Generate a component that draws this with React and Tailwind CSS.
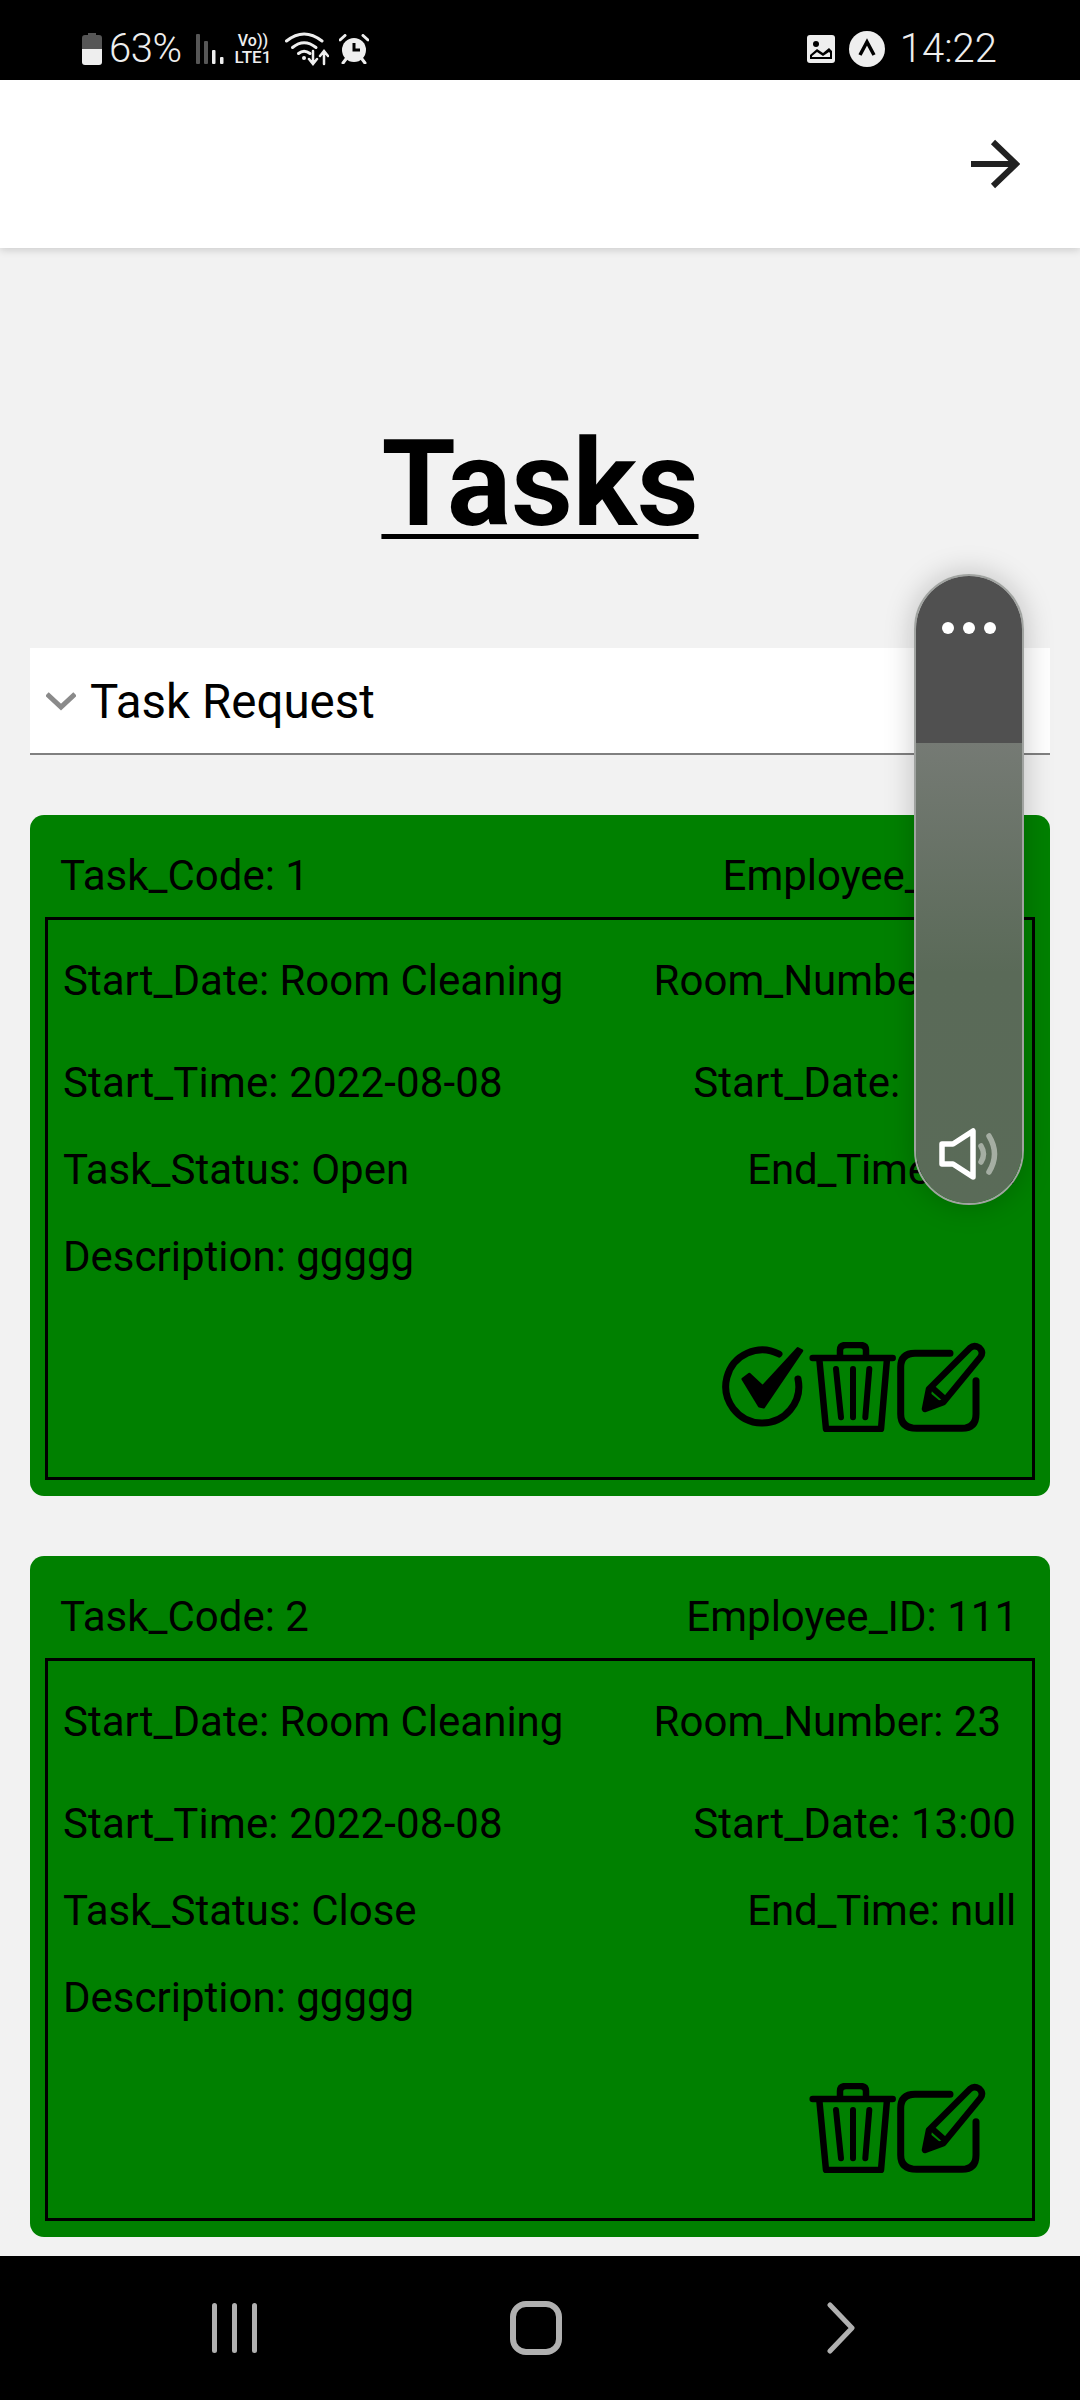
import React from 'react';

const font = "font-['Roboto','Liberation_Sans',sans-serif]";

const CheckIcon = () => (
  <svg width="90" height="90" viewBox="0 0 90 90" fill="none">
    <path d="M60 12 A36.5 36.5 0 1 0 79 37" stroke="#000" strokeWidth="7" strokeLinecap="round" />
    <path d="M23.7 37 L30.3 32 L43.7 44.3 L78.7 6.3 L83 8.7 L44.7 65.3 L40.3 64.3 Z" fill="#000" stroke="#000" strokeWidth="2.5" strokeLinejoin="round" />
  </svg>
);

const TrashIcon = () => (
  <svg width="90" height="90" viewBox="0 0 90 90" fill="none" stroke="#000" strokeLinecap="round" strokeLinejoin="round">
    <path d="M3.7 16 H83.7" strokeWidth="6.5" />
    <path d="M31 14 V8 Q31 3 37 3 H51 Q57 3 57 8 V14" strokeWidth="6.5" />
    <path d="M10.3 17 L17 87 H72 L78 17" strokeWidth="6.5" />
    <path d="M27 27 L32 75.3 M44 27 V75.3 M60.3 27 L56.3 75.3" strokeWidth="6" />
  </svg>
);

const EditIcon = () => (
  <svg width="90" height="90" viewBox="0 0 90 90" fill="none" stroke="#000" strokeLinecap="round" strokeLinejoin="round" className="ml-[-3px]">
    <path d="M54 11.3 H19 Q4.7 11.3 4.7 25.3 V72 Q4.7 86.3 20.7 86.3 H66 Q80 86.3 80 72 V38.7" strokeWidth="7" />
    <path d="M29 67 L33 47 L74 6 Q78 2.5 83 5.5 Q88 10 84.5 15 L47.3 60.3 Z" strokeWidth="6.5" />
    <path d="M35.7 45.3 L49 57" strokeWidth="6" />
    <path d="M29 67 L33 52 L44 61 Z" fill="#000" strokeWidth="3" />
  </svg>
);

const TaskCard = ({ code, status, employee, employeeClass, showDone }) => (
  <div className="bg-[#008000] rounded-[14px] h-[681px] px-[15px] pt-[36px]">
    <div className="flex justify-between items-center h-[50px] pl-[15px] pr-[17px]">
      <span>Task_Code: {code}</span>
      <span className={employeeClass}>Employee_ID: {employee}</span>
    </div>
    <div className="mt-[16px] border-[3px] border-black h-[563px] pl-[15px] pr-[16px] pt-[31px]">
      <div className="flex justify-between items-center h-[60px] pr-[15px]">
        <span>Start_Date: Room Cleaning</span>
        <span>Room_Number: 23</span>
      </div>
      <div className="flex justify-between items-center h-[60px] mt-[42px]">
        <span className="tracking-[0.15px]">Start_Time: 2022-08-08</span>
        <span className="tracking-[0.1px]">Start_Date: 13:00</span>
      </div>
      <div className="flex justify-between items-center h-[60px] mt-[27px]">
        <span>Task_Status: {status}</span>
        <span className="tracking-[-0.2px]">End_Time: null</span>
      </div>
      <div className="flex items-center h-[60px] mt-[27px]">
        <span>Description: ggggg</span>
      </div>
      <div className="flex justify-end mt-[55px] mr-[30px]">
        {showDone && <CheckIcon />}
        <TrashIcon />
        <EditIcon />
      </div>
    </div>
  </div>
);

const StatusBar = () => (
  <div className="h-20 bg-black text-[#eeeeee] flex items-center justify-between pt-[18px] pl-[82px] pr-[83px]">
    <div className="flex items-center">
      <svg width="20" height="32" viewBox="0 0 20 32">
        <path d="M6 0 H14 V2 H17 Q20 2 20 5 V16 H0 V5 Q0 2 3 2 H6 Z" fill="#565656" />
        <path d="M0 16 H20 V29 Q20 32 17 32 H3 Q0 32 0 29 Z" fill="#eeeeee" />
      </svg>
      <span className="text-[40px] leading-none font-light ml-[7px] tracking-[-0.5px]">63%</span>
      <svg width="28" height="30" viewBox="0 0 28 30" className="ml-[15px]">
        <rect x="0" y="0" width="4" height="30" rx="1" fill="#565656" />
        <rect x="8" y="7" width="4" height="23" rx="1" fill="#565656" />
        <rect x="16" y="16" width="3.5" height="14" rx="1" fill="#eeeeee" />
        <rect x="24" y="23" width="3.5" height="7" rx="1" fill="#eeeeee" />
      </svg>
      <div className="ml-[9px] w-[39px] flex flex-col items-center font-medium leading-none">
        <span className="text-[16px] leading-[16px]">Vo))</span>
        <span className="text-[17px] leading-[16px]">LTE1</span>
      </div>
      <svg width="44" height="34" viewBox="0 0 44 34" fill="none" stroke="#eeeeee" strokeLinecap="round" className="ml-[13px]">
        <path d="M1.5 9 Q19 -5 37 9" strokeWidth="3" />
        <path d="M7.5 15.5 Q19 6 31 15.5" strokeWidth="3" />
        <path d="M13.5 21.5 Q19 17 25 21.5" strokeWidth="3" />
        <circle cx="19" cy="26" r="2" fill="#eeeeee" stroke="none" />
        <path d="M28 19 V31 M24 27 L28 32 L32 27 M39 32 V20 M35 24 L39 19 L43 24" strokeWidth="2.5" />
      </svg>
      <svg width="30" height="30" viewBox="0 0 30 30" className="ml-[10px]">
        <circle cx="15" cy="16" r="12" fill="#eeeeee" />
        <path d="M15 9 V16 H21" stroke="#000" strokeWidth="3" fill="none" />
        <path d="M1 6 L6 1.5 M29 6 L24 1.5 M4 29 L7 25 M26 29 L23 25" stroke="#eeeeee" strokeWidth="3" strokeLinecap="round" />
      </svg>
    </div>
    <div className="flex items-center">
      <svg width="28" height="28" viewBox="0 0 28 28">
        <rect width="28" height="28" rx="3" fill="#eeeeee" />
        <circle cx="9" cy="9" r="3" fill="#000" />
        <path d="M3 24 V20 L10 14 L16 18 L22 13 L25 16 V24 Z" fill="#000" />
        <path d="M5 22 V21 L10 17 L16 21 L22 17 L23 18 V22 Z" fill="#eeeeee" />
      </svg>
      <svg width="36" height="36" viewBox="0 0 36 36" className="ml-[14px]">
        <circle cx="18" cy="18" r="18" fill="#eeeeee" />
        <path d="M11 24 L18 11 L25 24" stroke="#000" strokeWidth="3.5" fill="none" />
      </svg>
      <span className="text-[40px] leading-none font-light ml-[15px]">14:22</span>
    </div>
  </div>
);

const VolumePanel = () => (
  <div className="absolute left-[914px] top-[574px] w-[110px] h-[631px] rounded-[55px] overflow-hidden border-2 border-[#a0a3a0] flex flex-col shadow-[0_0_30px_rgba(0,0,0,0.22)]">
    <div className="h-[167px] bg-[#505050] flex justify-center gap-[9px] pt-[46px]">
      <span className="w-3 h-3 rounded-full bg-white" />
      <span className="w-3 h-3 rounded-full bg-white" />
      <span className="w-3 h-3 rounded-full bg-white" />
    </div>
    <div className="flex-1 bg-gradient-to-b from-[#757a74] via-[#5a6a58] to-[#5a6b58] flex justify-center items-end pb-[23px]">
      <svg width="60" height="52" viewBox="0 0 60 52" fill="none" strokeLinecap="round" strokeLinejoin="round">
        <path d="M3 16 H14 L34 3 V49 L14 36 H3 Z" stroke="#fff" strokeWidth="5.5" />
        <path d="M42 18 Q47 26 42 34" stroke="#a5aea3" strokeWidth="5.5" />
        <path d="M50 8 Q61 26 50 44" stroke="#a5aea3" strokeWidth="5.5" />
      </svg>
    </div>
  </div>
);

export default function App() {
  return (
    <div className={`relative w-[1080px] h-[2400px] overflow-hidden bg-[#f2f2f2] text-black ${font}`}>
      <StatusBar />
      <div className="h-[168px] bg-white flex items-center justify-end pr-[60px] shadow-[0_2px_8px_rgba(0,0,0,0.16)]">
        <svg width="50" height="50" viewBox="0 0 50 50" fill="none" stroke="#212121" strokeWidth="6">
          <path d="M1 25 H45 M23 3 L46 25 L23 47" />
        </svg>
      </div>
      <h1 className="mt-[161px] h-[139px] text-center text-[120px] leading-[150px] font-bold underline decoration-[5px] underline-offset-[9px]">Tasks</h1>
      <div className="px-[30px] mt-[100px] h-[1608px] text-[42px] leading-[50px]">
        <div className="h-[107px] bg-white border-b-2 border-[#808080] flex items-center pl-[16px] text-[47.5px]">
          <svg width="30" height="20" viewBox="0 0 30 20" fill="none" stroke="#8a8a8a" strokeWidth="5">
            <path d="M1 3 L15 16 L29 3" />
          </svg>
          <span className="ml-[14px] pt-[3px]">Task Request</span>
        </div>
        <div className="mt-[60px] flex flex-col gap-[60px]">
          <TaskCard code="1" status="Open" employee="1" employeeClass="mr-[11px]" showDone />
          <TaskCard code="2" status="Close" employee="111" />
        </div>
      </div>
      <div className="h-[144px] bg-black grid grid-cols-3 items-center pl-[83px] pr-[87px]">
        <div className="flex justify-center gap-[15px]">
          <span className="w-[5px] h-[50px] rounded-full bg-[#b0b0b0]" />
          <span className="w-[5px] h-[50px] rounded-full bg-[#b0b0b0]" />
          <span className="w-[5px] h-[50px] rounded-full bg-[#b0b0b0]" />
        </div>
        <div className="flex justify-center">
          <span className="w-[52px] h-[54px] rounded-[16px] border-[6px] border-[#b0b0b0] mr-[3px]" />
        </div>
        <div className="flex justify-center">
          <svg width="30" height="52" viewBox="0 0 30 52" fill="none" stroke="#b0b0b0" strokeWidth="5" strokeLinecap="round" strokeLinejoin="round">
            <path d="M4 3 L26 26 L4 49" />
          </svg>
        </div>
      </div>
      <VolumePanel />
    </div>
  );
}
